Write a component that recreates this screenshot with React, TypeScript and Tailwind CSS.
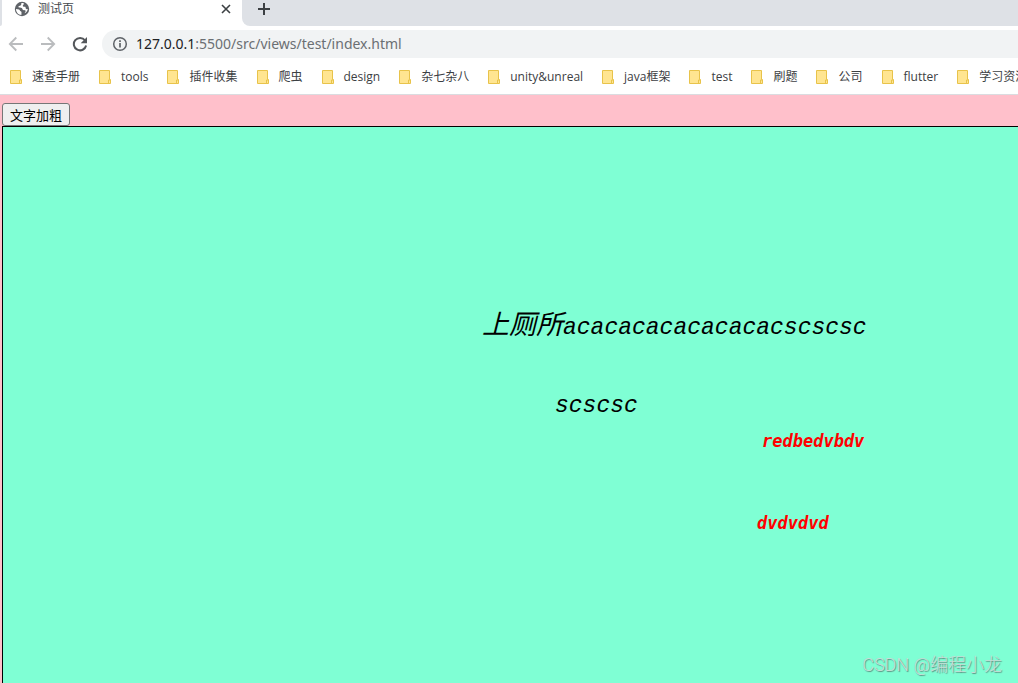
import { useState } from "react";

const BOOKMARKS = [
  "速查手册",
  "tools",
  "插件收集",
  "爬虫",
  "design",
  "杂七杂八",
  "unity&unreal",
  "java框架",
  "test",
  "刷题",
  "公司",
  "flutter",
  "学习资源",
];

function GlobeIcon() {
  return (
    <svg width="16" height="16" viewBox="0 0 16 16" className="shrink-0">
      <circle cx="8" cy="8" r="7.2" fill="#5f6368" />
      <path
        d="M7.3 2.2c-.2 1.2.3 1.6-.7 2.2-.9.5-2.2.3-2.2 1.4 0 1.2 2.5.7 3.4 1.3.9.5.3 1.5 1.3 1.9 1 .3 2.6-.1 2.6 1.1 0 .9-.9 1.1-1 2.2 1.6-.9 2.9-2.5 3.1-4.3-.9.3-1.6.2-2-.4-.5-.8.2-1.6-.7-1.9-.9-.3-2 .2-2.3-.8-.2-.8.9-.9 1-1.9.1-.5-.3-.8-1-.9-.5-.1-1-.1-1.5.1z"
        fill="#fff"
      />
      <path
        d="M2 7.9c1 .1 2.2.2 3.1.7.9.5.7 1.4 1.6 1.7.6.3.9.7.8 1.5l-.1 2.1C4.4 13.7 2 11.2 2 7.9z"
        fill="#fff"
      />
    </svg>
  );
}

function ArrowIcon({ flip }: { flip?: boolean }) {
  return (
    <svg width="16" height="16" viewBox="0 0 16 16" fill="none" stroke="#babcbe" strokeWidth="1.8" className={flip ? "rotate-180" : ""}>
      <path d="M15 8H2M8.3 1.5L1.8 8l6.5 6.5" />
    </svg>
  );
}

function ReloadIcon() {
  return (
    <svg width="16" height="16" viewBox="0 0 16 16" fill="none">
      <path d="M13 4.4A6.2 6.2 0 1 0 14.1 9.5" stroke="#54575b" strokeWidth="2" />
      <path d="M15 1v6.3H8.7z" fill="#54575b" />
    </svg>
  );
}

function InfoIcon() {
  return (
    <svg width="16" height="16" viewBox="0 0 16 16" fill="none" stroke="#5f6368">
      <circle cx="8" cy="8" r="6.3" strokeWidth="1.5" />
      <path d="M8 7v4.5M8 4.3v1.7" strokeWidth="1.7" />
    </svg>
  );
}

function FolderIcon() {
  return (
    <svg width="12" height="14" viewBox="0 0 12 14" className="shrink-0">
      <path d="M.5.5h10v9h1v4H.5z" fill="#ffe591" stroke="#e8c34a" />
      <path d="M9.5 13.5V10H11" fill="none" stroke="#e8c34a" />
    </svg>
  );
}

export default function App() {
  const [bold, setBold] = useState(false);

  return (
    <div className="flex min-h-screen flex-col overflow-hidden bg-white font-['Noto_Sans','Noto_Sans_CJK_SC',sans-serif]">
      {/* Tab strip */}
      <div className="flex h-[26px] bg-white">
        <div className="w-0.5 rounded-br-lg bg-[#dee1e6]" />
        <div className="flex w-60 items-start bg-white pr-2.5 pl-3">
          <div className="flex h-[18px] flex-1 items-center gap-2">
            <GlobeIcon />
            <span className="text-xs text-[#45494d]">测试页</span>
          </div>
          <button aria-label="关闭" className="flex h-[18px] w-3 items-center justify-center">
            <svg width="10" height="10" viewBox="0 0 10 10" stroke="#3c4043" strokeWidth="1.6">
              <path d="M1 1l8 8M9 1L1 9" />
            </svg>
          </button>
        </div>
        <div className="flex flex-1 items-start rounded-bl-lg bg-[#dee1e6] pl-4">
          <button aria-label="新标签页" className="flex h-[18px] items-center">
            <svg width="12" height="12" viewBox="0 0 12 12" stroke="#3c4043" strokeWidth="2">
              <path d="M6 0v12M0 6h12" />
            </svg>
          </button>
        </div>
      </div>

      {/* Toolbar */}
      <div className="flex h-9 items-center pl-2">
        <div className="flex gap-4">
          <button aria-label="后退"><ArrowIcon /></button>
          <button aria-label="前进"><ArrowIcon flip /></button>
          <button aria-label="重新加载"><ReloadIcon /></button>
        </div>
        <div className="ml-3.5 flex h-7 flex-1 items-center gap-2 rounded-l-full bg-[#f1f3f4] pl-2.5 text-sm">
          <InfoIcon />
          <div>
            <span className="text-[#202124]">127.0.0.1</span>
            <span className="text-[#6b6f73]">:5500/src/views/test/index.html</span>
          </div>
        </div>
      </div>

      {/* Bookmarks bar */}
      <nav className="flex h-[33px] items-center gap-[19px] overflow-hidden border-b border-[#dadce0] pb-0.5 pl-2.5 font-['Open_Sans','Noto_Sans_CJK_SC',sans-serif]">
        {BOOKMARKS.map((name) => (
          <a key={name} href="#" className="flex shrink-0 items-center gap-2.5 text-xs whitespace-nowrap text-[#3c4043]">
            <FolderIcon />
            {name}
          </a>
        ))}
      </nav>

      {/* Page */}
      <main className="flex flex-1 flex-col items-start bg-[#ffc0cb] pt-2 pl-0.5">
        <button
          onClick={() => setBold(!bold)}
          className="h-[23px] rounded-[3px] border border-[#767676] bg-[#efefef] px-[7px] font-['Noto_Sans_CJK_SC',sans-serif] text-[13px] leading-5 text-black"
        >
          文字加粗
        </button>
        <div className="relative w-full flex-1 border-t border-l border-black bg-[#7fffd4] font-['Liberation_Mono','Noto_Sans_CJK_SC',monospace] whitespace-nowrap italic">
          <p className={`absolute top-[182px] left-[479px] text-[23px] leading-9 text-black ${bold ? "font-bold" : ""}`}>
            <span className="text-[27px]">上厕所</span>acacacacacacacacscscsc
          </p>
          <p className={`absolute top-[261px] left-[552px] text-[23px] leading-9 text-black ${bold ? "font-bold" : ""}`}>
            scscsc
          </p>
          <p className="absolute top-[302px] left-[759px] font-['DejaVu_Sans_Mono',monospace] text-[17px] leading-6 font-bold text-[#ff0000]">
            redbedvbdv
          </p>
          <p className="absolute top-[384px] left-[754px] font-['DejaVu_Sans_Mono',monospace] text-[17px] leading-6 font-bold text-[#ff0000]">
            dvdvdvd
          </p>
          <div className="absolute right-4 bottom-1.5 font-['Roboto','Noto_Sans_CJK_SC',sans-serif] text-lg leading-6 font-light text-[#c5ddd6] not-italic [text-shadow:1px_1px_1px_#5d8f80]">
            CSDN @编程小龙
          </div>
        </div>
      </main>
    </div>
  );
}
